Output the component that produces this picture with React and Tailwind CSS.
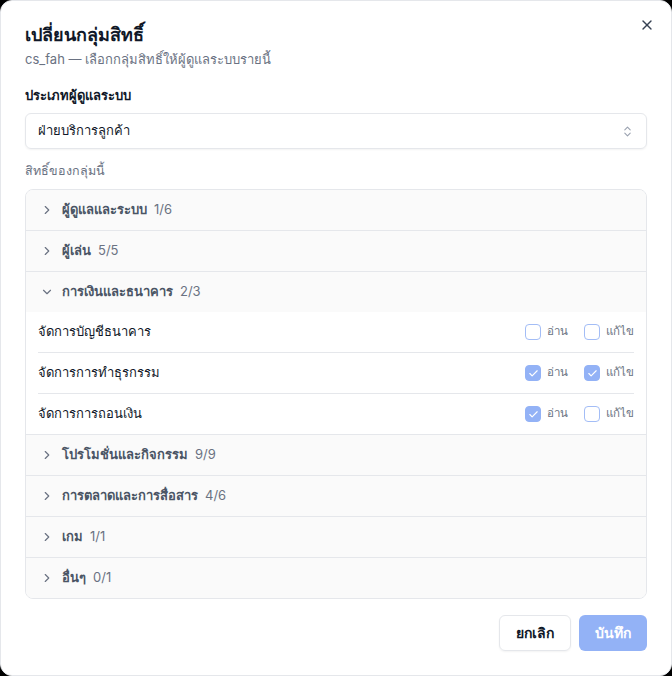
import { useState } from "react";
import { X, ChevronRight, ChevronDown, ChevronsUpDown, Check } from "lucide-react";

const groups = [
  { name: "ผู้ดูแลและระบบ", count: "1/6" },
  { name: "ผู้เล่น", count: "5/5" },
  {
    name: "การเงินและธนาคาร",
    count: "2/3",
    open: true,
    items: [
      { name: "จัดการบัญชีธนาคาร", read: false, edit: false },
      { name: "จัดการการทำธุรกรรม", read: true, edit: true },
      { name: "จัดการการถอนเงิน", read: true, edit: false },
    ],
  },
  { name: "โปรโมชั่นและกิจกรรม", count: "9/9" },
  { name: "การตลาดและการสื่อสาร", count: "4/6" },
  { name: "เกม", count: "1/1" },
  { name: "อื่นๆ", count: "0/1" },
];

const Box = ({ checked, label }) => (
  <label className="flex items-center gap-1.5 text-[11.5px] text-gray-500">
    <span
      className={`flex h-4 w-4 items-center justify-center rounded-[4px] border ${
        checked ? "border-[#93b2f6] bg-[#93b2f6]" : "border-[#a3bdf6] bg-white"
      }`}
    >
      {checked && <Check size={11} strokeWidth={2.5} className="text-white" />}
    </span>
    {label}
  </label>
);

const GroupRow = ({ group }) => {
  const [open, setOpen] = useState(!!group.open);
  return (
    <div className="border-b border-gray-200 last:border-b-0">
      <button
        onClick={() => setOpen(!open)}
        className="flex h-10 w-full items-center gap-2 bg-[#fafafa] pl-3.5 text-left text-[13px]"
      >
        {open ? (
          <ChevronDown size={14} className="text-gray-500" />
        ) : (
          <ChevronRight size={14} className="text-gray-500" />
        )}
        <span className="flex items-center gap-[7px]">
          <span className="font-semibold text-gray-600">{group.name}</span>
          <span className="text-gray-500">{group.count}</span>
        </span>
      </button>
      {open && group.items && (
        <div className="px-3">
          {group.items.map((it) => (
            <div
              key={it.name}
              className="flex h-[41px] items-center justify-between border-b border-gray-200 last:border-b-0 last:h-10"
            >
              <span className="text-[13px] text-gray-900">{it.name}</span>
              <div className="flex items-center gap-4">
                <Box checked={it.read} label="อ่าน" />
                <Box checked={it.edit} label="แก้ไข" />
              </div>
            </div>
          ))}
        </div>
      )}
    </div>
  );
};

export default function App() {
  return (
    <div
      className="h-[676px] w-[672px] bg-black"
      style={{ fontFamily: '"Inter", "Noto Sans", sans-serif' }}
    >
      <div className="relative flex h-full w-full flex-col rounded-xl border border-gray-200 bg-white px-6 pt-5 pb-6">
        <button className="absolute right-4 top-4 text-gray-700">
          <X size={16} />
        </button>
        <h2 className="text-lg font-bold leading-7 text-gray-900">เปลี่ยนกลุ่มสิทธิ์</h2>
        <p className="text-[13px] leading-5 text-gray-500">cs_fah — เลือกกลุ่มสิทธิ์ให้ผู้ดูแลระบบรายนี้</p>

        <div className="mt-4 text-[13px] leading-5 font-semibold text-gray-900">ประเภทผู้ดูแลระบบ</div>
        <div className="mt-2 flex h-9 items-center justify-between rounded-md border border-gray-200 px-3 text-[13px] text-gray-900 shadow-xs">
          <span>ฝ่ายบริการลูกค้า</span>
          <ChevronsUpDown size={13} className="text-gray-400" />
        </div>

        <div className="mt-3 text-[12.5px] leading-5 text-gray-500">สิทธิ์ของกลุ่มนี้</div>
        <div className="mt-2 overflow-hidden rounded-lg border border-gray-200">
          {groups.map((g) => (
            <GroupRow key={g.name} group={g} />
          ))}
        </div>

        <div className="mt-auto flex justify-end gap-2">
          <button className="h-9 rounded-md border border-gray-200 px-4 text-sm font-semibold text-gray-900 shadow-xs">
            ยกเลิก
          </button>
          <button className="h-9 rounded-md bg-[#93b2f6] px-4 text-sm font-semibold text-white">
            บันทึก
          </button>
        </div>
      </div>
    </div>
  );
}
